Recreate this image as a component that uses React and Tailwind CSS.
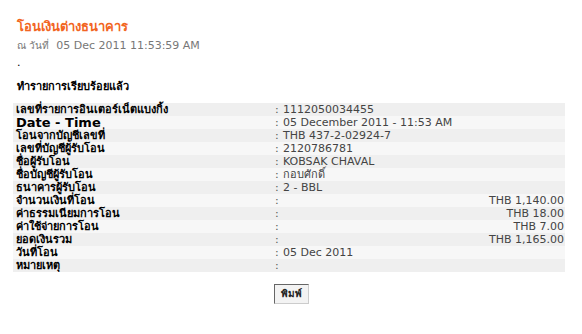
import React from "react";

const rows = [
  { label: "เลขที่รายการอินเตอร์เน็ตแบงกิ้ง", value: "1112050034455" },
  { label: "Date - Time", value: "05 December 2011 - 11:53 AM" },
  { label: "โอนจากบัญชีเลขที่", value: "THB 437-2-02924-7" },
  { label: "เลขที่บัญชีผู้รับโอน", value: "2120786781" },
  { label: "ชื่อผู้รับโอน", value: "KOBSAK CHAVAL" },
  { label: "ชื่อบัญชีผู้รับโอน", value: "กอบศักดิ์" },
  { label: "ธนาคารผู้รับโอน", value: "2 - BBL" },
  { label: "จำนวนเงินที่โอน", value: "THB 1,140.00", amount: true },
  { label: "ค่าธรรมเนียมการโอน", value: "THB 18.00", amount: true },
  { label: "ค่าใช้จ่ายการโอน", value: "THB 7.00", amount: true },
  { label: "ยอดเงินรวม", value: "THB 1,165.00", amount: true },
  { label: "วันที่โอน", value: "05 Dec 2011" },
  { label: "หมายเหตุ", value: "" },
];

const App = () => {
  return (
    <div
      className="w-[582px] h-[334px] bg-white overflow-hidden text-[11px] text-[#333]"
      style={{ fontFamily: '"DejaVu Sans", "Noto Sans", sans-serif' }}
    >
      <div className="pl-[17px] pt-[18px]">
        <h1 className="text-[13px] font-bold text-[#f26522] leading-[18px]">
          โอนเงินต่างธนาคาร
        </h1>
        <p className="mt-[3px] text-[#777] leading-[14px]">
          <span className="text-[10px]">ณ วันที่</span>&nbsp; 05 Dec 2011 11:53:59 AM
        </p>
        <p className="leading-[14px] mt-[3px] text-black">.</p>
        <p className="mt-[10px] font-bold text-black leading-[14px]">ทำรายการเรียบร้อยแล้ว</p>
      </div>

      {/* transaction details */}
      <table className="ml-[13px] mt-[9px] w-[552px] border-collapse">
        <tbody>
          {rows.map((r, i) => (
            <tr key={i} className={i % 2 === 0 ? "bg-[#efefef]" : "bg-[#f7f7f7]"}>
              <td
                className={
                  r.label === "Date - Time"
                    ? "w-[262px] h-[13px] p-0 pl-[3px] leading-[13px] font-bold text-black text-[13px]"
                    : "w-[262px] h-[13px] p-0 pl-[3px] leading-[13px] font-bold text-black"
                }
              >
                {r.label}
              </td>
              <td className="w-[8px] h-[13px] p-0 leading-[13px] text-[#555]">:</td>
              <td
                className={
                  r.amount
                    ? "h-[13px] p-0 pr-[1px] leading-[13px] text-right text-[#444]"
                    : "h-[13px] p-0 leading-[13px] text-[#444]"
                }
              >
                {r.value}
              </td>
            </tr>
          ))}
        </tbody>
      </table>

      <div className="flex justify-center mt-[12px]">
        <button className="h-[20px] px-[6px] border border-t-[#666] border-l-[#666] border-r-[#ccc] border-b-[#ccc] bg-[#f3f3f3] text-[10px] font-bold text-[#222] leading-none">
          พิมพ์
        </button>
      </div>
    </div>
  );
};

export default App;
